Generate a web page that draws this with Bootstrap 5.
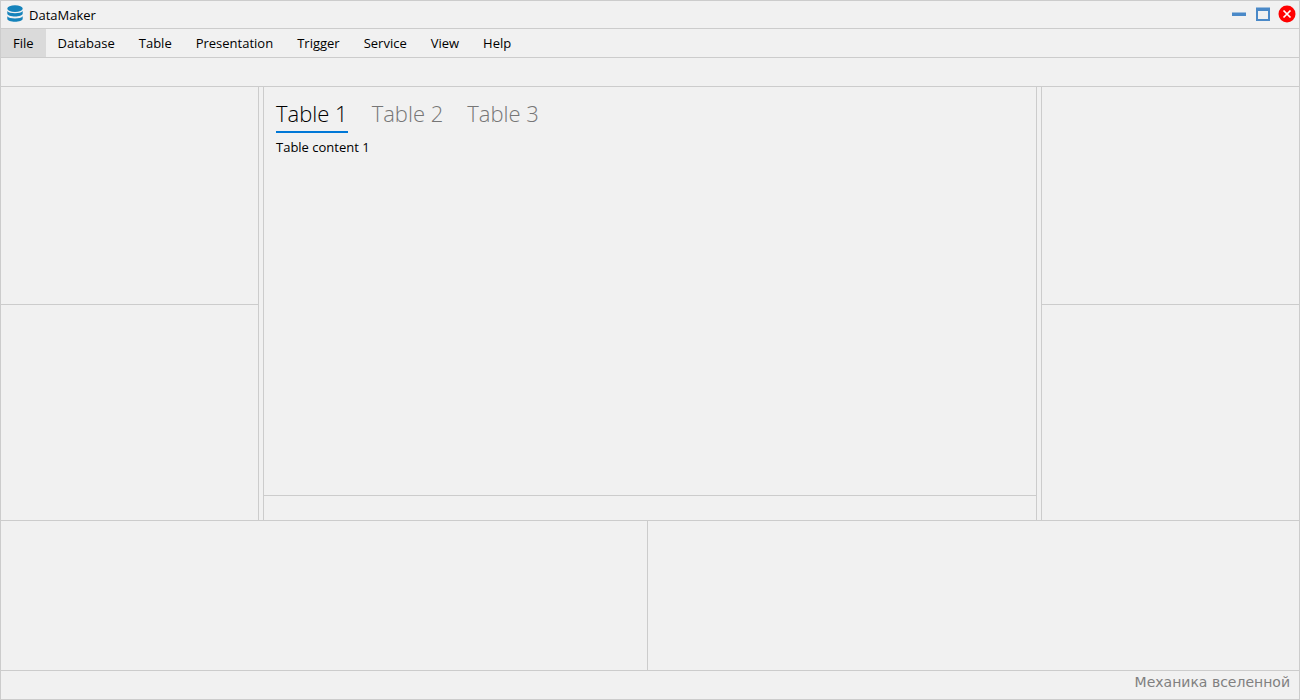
<!DOCTYPE html>
<html lang="en">
<head>
<meta charset="utf-8">
<meta name="viewport" content="width=device-width, initial-scale=1">
<title>DataMaker</title>
<link href="https://cdn.jsdelivr.net/npm/bootstrap@5.3.0/dist/css/bootstrap.min.css" rel="stylesheet">
<style>
  :root { --line: #ccc; --surface: #f1f1f1; --accent: #0078d7; }
  body { font-family: "Open Sans", "Noto Sans", sans-serif; font-size: 13px; line-height: 20px; color: #000; background: var(--surface); }
  .app-window { border: 1px solid var(--line); background: var(--surface); }
  .line-b { border-bottom: 1px solid var(--line); }
  .line-e { border-right: 1px solid var(--line); }
  .line-s { border-left: 1px solid var(--line); }
  .app-strip { height: 29px; flex: none; }
  .titlebar { height: 28px; padding: 0 3px 2px 5px; }
  .app-title { font-size: 13px; font-weight: 400; line-height: 20px; padding-top: 2px; margin-left: 5px; }
  .win-controls { gap: 6px; }
  .win-btn { width: 18px; height: 18px; padding: 0; border: 0; background: none; display: flex; }
  .menu-item { border: 0; background: none; color: #000; padding: 0 12px; }
  .menu-item.active, .menu-item:hover { background: #dadada; }
  .side-pane { flex: 0 0 258px; display: grid; grid-template-rows: 218fr 215fr; }
  .workspace { gap: 4px; }
  .tab-bar { gap: 24px; padding: 11px 12px 0; }
  .tab-item { border: 0; border-bottom: 2px solid transparent; background: none; padding: 0 0 3px; font-size: 22px; line-height: 30px; font-weight: 300; color: #767676; }
  .tab-item.active { color: #000; border-bottom-color: var(--accent); }
  .tab-text { padding: 4px 12px; }
  .center-foot { height: 25px; border-top: 1px solid var(--line); }
  .bottom-area { flex: 0 0 150px; }
  .bottom-first { flex: 0 0 calc(50% - 2px); }
  .statusbar { height: 28px; flex: none; padding-right: 9px; font-family: "DejaVu Sans", sans-serif; font-size: 14px; line-height: 22px; color: #808080; }
</style>
</head>
<body>
<div class="app-window d-flex flex-column vh-100">
  <header class="titlebar d-flex align-items-center line-b flex-shrink-0">
    <svg width="18" height="20" viewBox="0 0 18 20" fill="#1583bb" aria-hidden="true">
      <ellipse cx="9" cy="4.7" rx="7.7" ry="3.4"/>
      <path d="M1.3 7C3 10 15 10 16.7 7v2.6c0 4-15.400 4-15.400 0z"/>
      <path d="M1.300 12.200c1.700 3 13.700 3 15.400 0v2.600c0 4-15.400 4-15.400 0z"/>
    </svg>
    <h1 class="app-title mb-0">DataMaker</h1>
    <div class="win-controls d-flex ms-auto">
      <button class="win-btn" type="button" aria-label="Minimize">
        <svg width="18" height="18" viewBox="0 0 18 18"><rect x="2" y="7.500" width="14" height="3.500" fill="#4a89c8"/></svg>
      </button>
      <button class="win-btn" type="button" aria-label="Maximize">
        <svg width="18" height="18" viewBox="0 0 18 18"><path fill="#4a89c8" fill-rule="evenodd" d="M2 2.500h14V16H2zM4 6v8h10V6z"/></svg>
      </button>
      <button class="win-btn" type="button" aria-label="Close">
        <svg width="18" height="18" viewBox="0 0 18 18"><circle cx="9" cy="9" r="8.500" fill="#f00"/><path d="M5.500 5.500l7 7m0-7l-7 7" stroke="#fff" stroke-width="1.700"/></svg>
      </button>
    </div>
  </header>
  <nav class="app-strip line-b d-flex" aria-label="Main menu">
    <button class="menu-item active" type="button">File</button>
    <button class="menu-item" type="button">Database</button>
    <button class="menu-item" type="button">Table</button>
    <button class="menu-item" type="button">Presentation</button>
    <button class="menu-item" type="button">Trigger</button>
    <button class="menu-item" type="button">Service</button>
    <button class="menu-item" type="button">View</button>
    <button class="menu-item" type="button">Help</button>
  </nav>
  <div class="app-strip line-b"></div>
  <main class="workspace line-b d-flex flex-grow-1">
    <aside class="side-pane line-e"><div class="line-b"></div><div></div></aside>
    <section class="line-s line-e d-flex flex-column flex-grow-1">
      <div class="tab-bar d-flex" role="tablist">
        <button class="tab-item active" id="tab1" type="button" role="tab" data-bs-toggle="tab" data-bs-target="#content1" aria-controls="content1" aria-selected="true">Table 1</button>
        <button class="tab-item" id="tab2" type="button" role="tab" data-bs-toggle="tab" data-bs-target="#content2" aria-controls="content2" aria-selected="false">Table 2</button>
        <button class="tab-item" id="tab3" type="button" role="tab" data-bs-toggle="tab" data-bs-target="#content3" aria-controls="content3" aria-selected="false">Table 3</button>
      </div>
      <div class="tab-content tab-text flex-grow-1">
        <div class="tab-pane active" id="content1" role="tabpanel" aria-labelledby="tab1">Table content 1</div>
        <div class="tab-pane" id="content2" role="tabpanel" aria-labelledby="tab2"></div>
        <div class="tab-pane" id="content3" role="tabpanel" aria-labelledby="tab3"></div>
      </div>
      <div class="center-foot"></div>
    </section>
    <aside class="side-pane line-s"><div class="line-b"></div><div></div></aside>
  </main>
  <div class="bottom-area line-b d-flex">
    <div class="bottom-first line-e"></div>
    <div class="flex-grow-1"></div>
  </div>
  <footer class="statusbar text-end" lang="ru">Механика вселенной</footer>
</div>
<script src="https://cdn.jsdelivr.net/npm/bootstrap@5.3.0/dist/js/bootstrap.bundle.min.js"></script>
</body>
</html>
